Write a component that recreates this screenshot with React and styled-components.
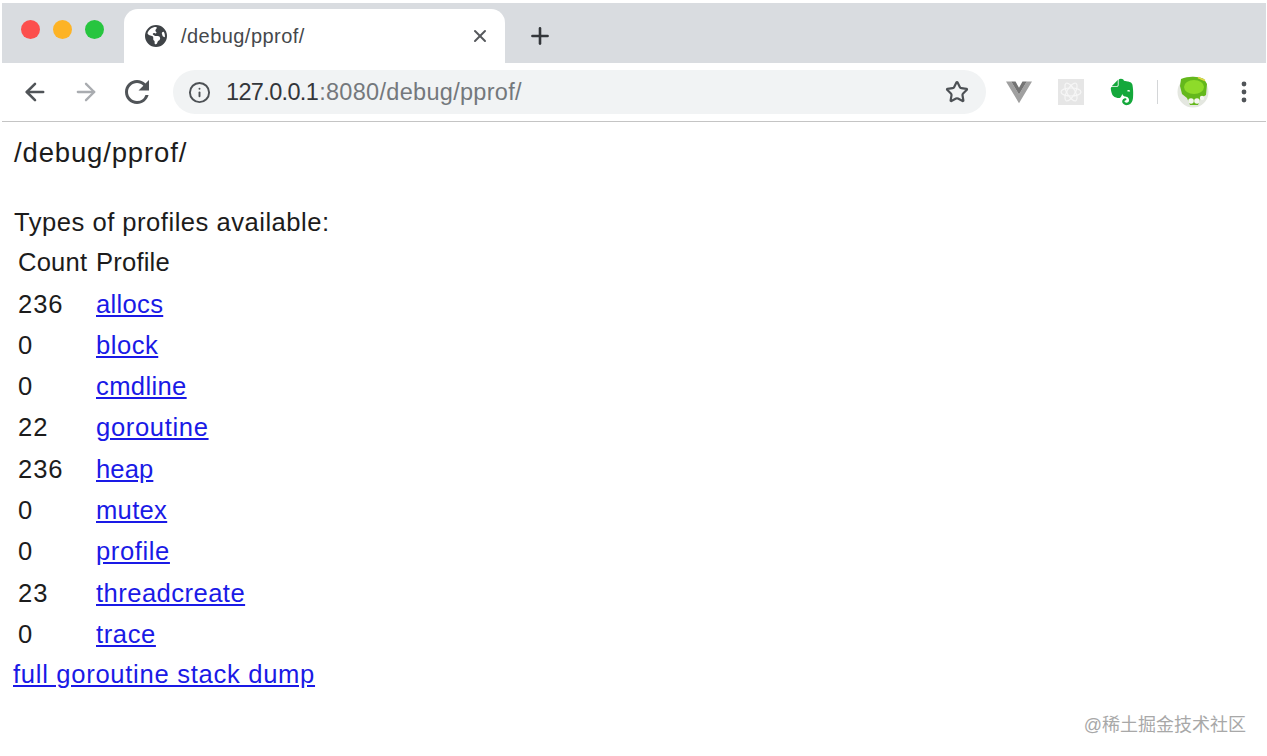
import React from "react";
import styled, { createGlobalStyle } from "styled-components";
import { ArrowLeft, ArrowRight, Info, Star, X, Plus } from "lucide-react";
import { MdRefresh } from "react-icons/md";
import { FaEarthAmericas, FaEvernote } from "react-icons/fa6";

const GlobalStyle = createGlobalStyle`
  html, body {
    margin: 0;
    background: #fff;
    overflow: hidden;
  }
  body {
    font-family: "Liberation Sans", Arial, sans-serif;
  }
`;

const Page = styled.div`
  position: relative;
  width: 1267px;
  height: 756px;
  padding-top: 3px;
  box-sizing: border-box;
`;

const TabStrip = styled.div`
  height: 60px;
  margin: 0 1px 0 2px;
  background: #d9dce0;
  display: flex;
  align-items: flex-end;
`;

const Lights = styled.div`
  width: 122px;
  height: 60px;
  padding: 17px 0 0 19px;
  box-sizing: border-box;
  display: flex;
  gap: 13px;
`;

const Light = styled.span`
  width: 19px;
  height: 19px;
  border-radius: 50%;
  background: ${(p) => p.$color};
`;

const Tab = styled.div`
  width: 381px;
  height: 54px;
  background: #fff;
  border-radius: 14px 14px 0 0;
  display: flex;
  align-items: center;
  padding: 0 15px 0 21px;
  box-sizing: border-box;
  color: #3c4043;
`;

const TabTitle = styled.span`
  flex: 1;
  margin-left: 14px;
  font-size: 20px;
  letter-spacing: 0.45px;
  color: #45484c;
`;

const NewTab = styled.div`
  margin: 0 0 14px 22px;
  height: 26px;
  color: #33363a;
`;

const Toolbar = styled.div`
  height: 58px;
  margin: 0 1px 0 2px;
  display: flex;
  align-items: center;
  padding-left: 19px;
  border-bottom: 1px solid #c4c4c4;
`;

const NavButton = styled.div`
  width: 28px;
  height: 28px;
  margin-right: 23px;
  display: flex;
  align-items: center;
  justify-content: center;
  color: ${(p) => (p.$off ? "#a9acb0" : "#505458")};

  svg {
    flex: none;
  }
`;

const Omnibox = styled.div`
  width: 813px;
  height: 44px;
  margin-left: -1px;
  border-radius: 22px;
  background: #f1f3f4;
  display: flex;
  align-items: center;
  padding: 0 17px 0 15px;
  box-sizing: border-box;
  color: #4d5155;
`;

const Url = styled.div`
  flex: 1;
  margin-left: 15px;
  font-size: 23.5px;
  letter-spacing: -0.65px;
  color: #33363a;
`;

const UrlDim = styled.span`
  margin-left: 1px;
  letter-spacing: 0.3px;
  color: #74787c;
`;

const Extensions = styled.div`
  flex: 1;
  display: flex;
  align-items: center;
  padding-left: 20px;
`;

const ExtSlot = styled.div`
  flex: none;
  width: 26px;
  height: 28px;
  margin-right: ${(p) => p.$gap}px;
  display: flex;
  align-items: center;
  justify-content: center;

  svg {
    flex: none;
  }
`;

const ExtDivider = styled.div`
  width: 1px;
  height: 24px;
  margin-right: 22px;
  background: #d4d6d8;
`;

const ReactTile = styled.div`
  width: 26px;
  height: 26px;
  background: #e6e6e6;
  display: flex;
  align-items: center;
  justify-content: center;
`;

const Content = styled.main`
  padding: 13px 0 0 13px;
  font-size: 25.6px;
  line-height: 36px;
  color: #1c1c1c;
`;

const Heading = styled.div`
  font-size: 27.5px;
  letter-spacing: 0.85px;
  margin-bottom: 33px;
  margin-left: 1px;
`;

const Lead = styled.div`
  letter-spacing: 0.5px;
  margin-left: 1px;
`;

const ProfileTable = styled.table`
  border-collapse: collapse;
  margin: 1.6px 0 1.9px;
  letter-spacing: 0.2px;

  td {
    height: 41.3px;
    padding: 0 0 0 5px;
    line-height: 30px;
  }
  td:first-child {
    width: 73px;
  }
`;

const CountValue = styled.span`
  letter-spacing: 0.9px;
`;

const ProfileLink = styled.a`
  color: #1a1ae6;
  text-decoration: underline;
  letter-spacing: ${(p) => p.$spacing};
`;

const Watermark = styled.div`
  position: absolute;
  right: 21px;
  top: 713px;
  font-size: 18px;
  line-height: 24px;
  color: #a8a8a8;
  font-family: "Liberation Sans", "Noto Sans CJK SC", sans-serif;
`;

const profiles = [
  { count: 236, name: "allocs", spacing: "0.3px" },
  { count: 0, name: "block", spacing: "0.5px" },
  { count: 0, name: "cmdline", spacing: "0.35px" },
  { count: 22, name: "goroutine", spacing: "0.65px" },
  { count: 236, name: "heap", spacing: "0.1px" },
  { count: 0, name: "mutex", spacing: "0.3px" },
  { count: 0, name: "profile", spacing: "0.6px" },
  { count: 23, name: "threadcreate", spacing: "0.45px" },
  { count: 0, name: "trace", spacing: "0.6px" },
];

const VueMark = () => (
  <svg width="26" height="24" viewBox="0 0 30 26">
    <path d="M0 1h6l9 15 9-15h6L15 26z" fill="#a0a0a0" />
    <path d="M6 1h5l4 7 4-7h5l-9 15z" fill="#747474" />
  </svg>
);

const ReactMark = () => (
  <svg width="22" height="22" viewBox="0 0 22 22" fill="none" stroke="#f6f6f6" strokeWidth="1.2">
    <ellipse cx="11" cy="11" rx="10" ry="4" />
    <ellipse cx="11" cy="11" rx="10" ry="4" transform="rotate(60 11 11)" />
    <ellipse cx="11" cy="11" rx="10" ry="4" transform="rotate(120 11 11)" />
  </svg>
);

const Avatar = () => (
  <svg width="32" height="32" viewBox="0 0 32 32">
    <circle cx="16" cy="16" r="15.5" fill="#e4e7e0" />
    <path d="M4 3c7-3 17-3 23 0l3 5-1 11-5 3-3 7h-8l-3-7-5-4-2-8z" fill="#64b81c" />
    <ellipse cx="17" cy="11" rx="10" ry="7" fill="#8edb2a" />
    <circle cx="14" cy="25" r="2.8" fill="#f4f6f0" />
    <circle cx="20" cy="25" r="2.8" fill="#f4f6f0" />
    <circle cx="25" cy="22" r="2.2" fill="#f4f6f0" />
    <path d="M21 1.5l7 3" stroke="#e2d84a" strokeWidth="1.6" />
  </svg>
);

const Kebab = () => (
  <svg width="8" height="24" viewBox="0 0 8 24" fill="#505458">
    <circle cx="4" cy="4" r="2.4" />
    <circle cx="4" cy="12" r="2.4" />
    <circle cx="4" cy="20" r="2.4" />
  </svg>
);

const App = () => {
  return (
    <Page>
      <GlobalStyle />
      <TabStrip>
        <Lights>
          <Light $color="#fc4f4d" />
          <Light $color="#fdb325" />
          <Light $color="#27c53f" />
        </Lights>
        <Tab>
          <FaEarthAmericas size={22} color="#3f4347" />
          <TabTitle>/debug/pprof/</TabTitle>
          <X size={20} strokeWidth={2.4} color="#55585c" />
        </Tab>
        <NewTab>
          <Plus size={26} strokeWidth={2.4} />
        </NewTab>
      </TabStrip>
      <Toolbar>
        <NavButton>
          <ArrowLeft size={28} strokeWidth={2.2} />
        </NavButton>
        <NavButton $off>
          <ArrowRight size={28} strokeWidth={2} />
        </NavButton>
        <NavButton>
          <MdRefresh size={36} />
        </NavButton>
        <Omnibox>
          <Info size={23} strokeWidth={2} />
          <Url>
            127.0.0.1<UrlDim>:8080/debug/pprof/</UrlDim>
          </Url>
          <Star size={24} strokeWidth={2.2} />
        </Omnibox>
        <Extensions>
          <ExtSlot $gap={26}>
            <VueMark />
          </ExtSlot>
          <ExtSlot $gap={25}>
            <ReactTile>
              <ReactMark />
            </ReactTile>
          </ExtSlot>
          <ExtSlot $gap={22}>
            <FaEvernote size={30} color="#14a83b" />
          </ExtSlot>
          <ExtDivider />
          <ExtSlot $gap={25}>
            <Avatar />
          </ExtSlot>
          <ExtSlot $gap={0}>
            <Kebab />
          </ExtSlot>
        </Extensions>
      </Toolbar>
      <Content>
        <Heading>/debug/pprof/</Heading>
        <Lead>Types of profiles available:</Lead>
        <ProfileTable>
          <thead>
            <tr>
              <td>Count</td>
              <td>Profile</td>
            </tr>
          </thead>
          <tbody>
            {profiles.map((p) => (
              <tr key={p.name}>
                <td>
                  <CountValue>{p.count}</CountValue>
                </td>
                <td>
                  <ProfileLink href="#" $spacing={p.spacing}>
                    {p.name}
                  </ProfileLink>
                </td>
              </tr>
            ))}
          </tbody>
        </ProfileTable>
        <ProfileLink href="#" $spacing="0.7px">
          full goroutine stack dump
        </ProfileLink>
      </Content>
      <Watermark>@稀土掘金技术社区</Watermark>
    </Page>
  );
};

export default App;
